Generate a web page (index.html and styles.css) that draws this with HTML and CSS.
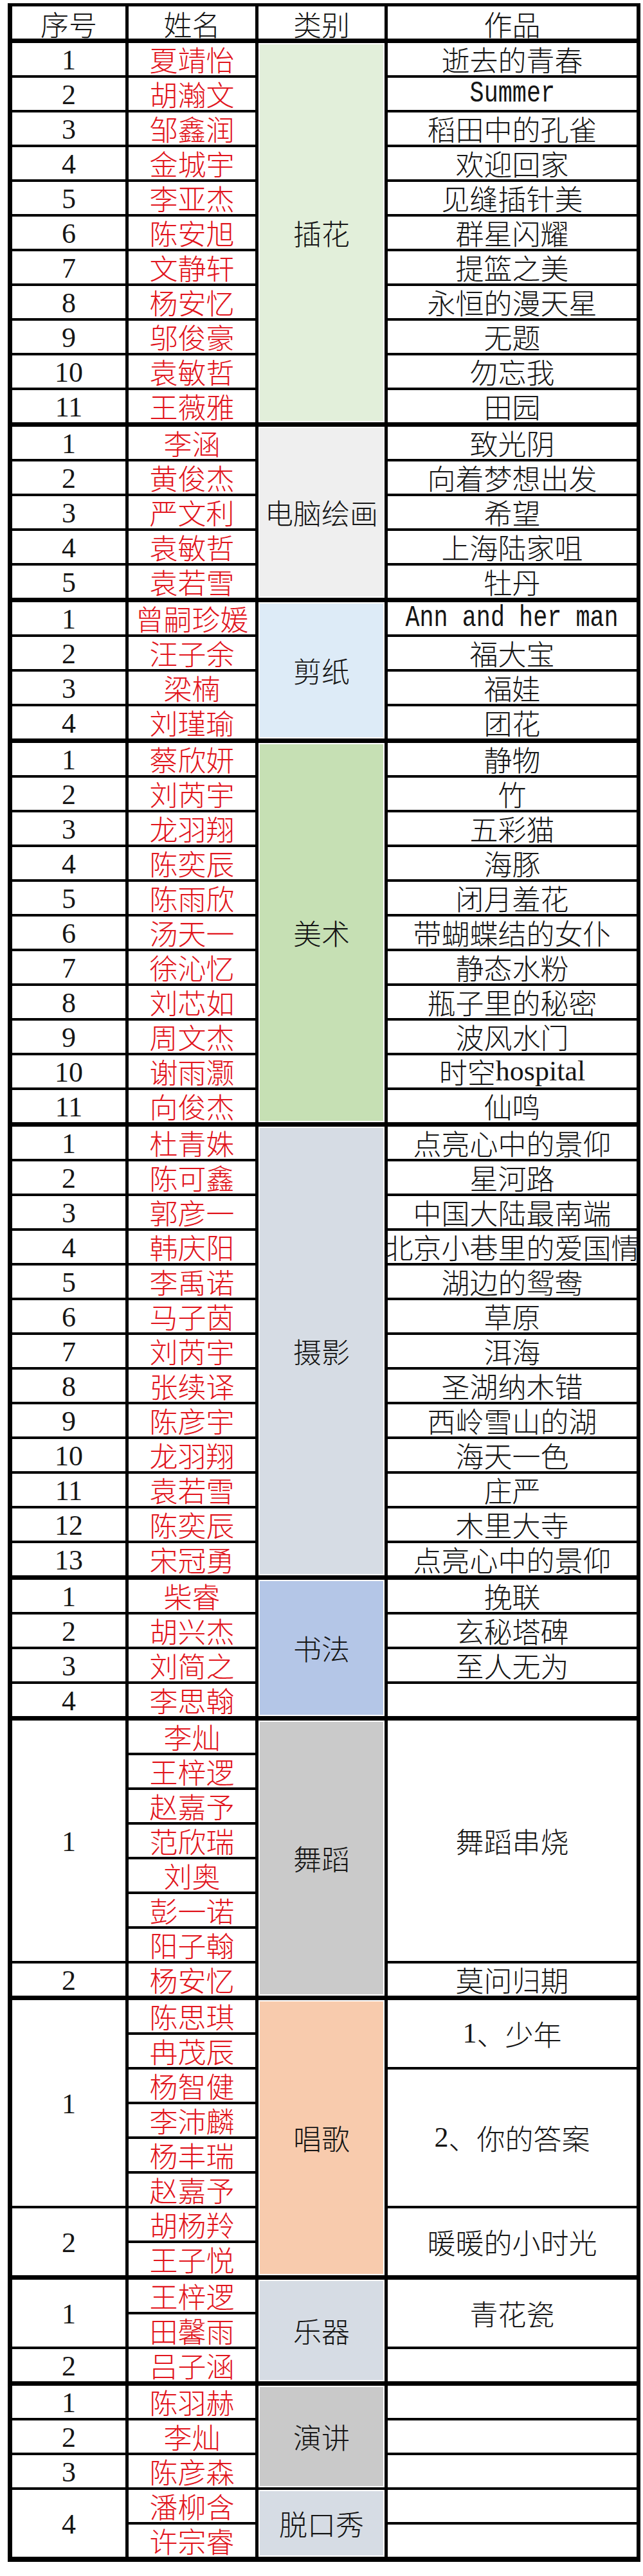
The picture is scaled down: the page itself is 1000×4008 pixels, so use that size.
FILE: index.html
```html
<!DOCTYPE html>
<html lang="zh-CN">
<head>
<meta charset="utf-8">
<title>作品名单</title>
<link rel="stylesheet" href="styles.css">
</head>
<body>
<div class="sheet">
  <div class="sec head">
    <div class="c n-h">序号</div>
    <div class="c nm-h">姓名</div>
    <div class="c cat-h">类别</div>
    <div class="c w">作品</div>
  </div>

  <div class="sec">
    <div class="c cat s11 bg-chahua">插花</div>
    <div class="c n">1</div><div class="c nm">夏靖怡</div><div class="c w">逝去的青春</div>
    <div class="c n">2</div><div class="c nm">胡瀚文</div><div class="c w"><span class="mono">Summer</span></div>
    <div class="c n">3</div><div class="c nm">邹鑫润</div><div class="c w">稻田中的孔雀</div>
    <div class="c n">4</div><div class="c nm">金城宇</div><div class="c w">欢迎回家</div>
    <div class="c n">5</div><div class="c nm">李亚杰</div><div class="c w">见缝插针美</div>
    <div class="c n">6</div><div class="c nm">陈安旭</div><div class="c w">群星闪耀</div>
    <div class="c n">7</div><div class="c nm">文静轩</div><div class="c w">提篮之美</div>
    <div class="c n">8</div><div class="c nm">杨安忆</div><div class="c w">永恒的漫天星</div>
    <div class="c n">9</div><div class="c nm">邬俊豪</div><div class="c w">无题</div>
    <div class="c n">10</div><div class="c nm">袁敏哲</div><div class="c w">勿忘我</div>
    <div class="c n">11</div><div class="c nm">王薇雅</div><div class="c w">田园</div>
  </div>

  <div class="sec">
    <div class="c cat s5 bg-diannao">电脑绘画</div>
    <div class="c n">1</div><div class="c nm">李涵</div><div class="c w">致光阴</div>
    <div class="c n">2</div><div class="c nm">黄俊杰</div><div class="c w">向着梦想出发</div>
    <div class="c n">3</div><div class="c nm">严文利</div><div class="c w">希望</div>
    <div class="c n">4</div><div class="c nm">袁敏哲</div><div class="c w">上海陆家咀</div>
    <div class="c n">5</div><div class="c nm">袁若雪</div><div class="c w">牡丹</div>
  </div>

  <div class="sec">
    <div class="c cat s4 bg-jianzhi">剪纸</div>
    <div class="c n">1</div><div class="c nm">曾嗣珍媛</div><div class="c w"><span class="mono">Ann and her man</span></div>
    <div class="c n">2</div><div class="c nm">汪子余</div><div class="c w">福大宝</div>
    <div class="c n">3</div><div class="c nm">梁楠</div><div class="c w">福娃</div>
    <div class="c n">4</div><div class="c nm">刘瑾瑜</div><div class="c w">团花</div>
  </div>

  <div class="sec">
    <div class="c cat s11 bg-meishu">美术</div>
    <div class="c n">1</div><div class="c nm">蔡欣妍</div><div class="c w">静物</div>
    <div class="c n">2</div><div class="c nm">刘芮宇</div><div class="c w">竹</div>
    <div class="c n">3</div><div class="c nm">龙羽翔</div><div class="c w">五彩猫</div>
    <div class="c n">4</div><div class="c nm">陈奕辰</div><div class="c w">海豚</div>
    <div class="c n">5</div><div class="c nm">陈雨欣</div><div class="c w">闭月羞花</div>
    <div class="c n">6</div><div class="c nm">汤天一</div><div class="c w">带蝴蝶结的女仆</div>
    <div class="c n">7</div><div class="c nm">徐沁忆</div><div class="c w">静态水粉</div>
    <div class="c n">8</div><div class="c nm">刘芯如</div><div class="c w">瓶子里的秘密</div>
    <div class="c n">9</div><div class="c nm">周文杰</div><div class="c w">波风水门</div>
    <div class="c n">10</div><div class="c nm">谢雨灏</div><div class="c w">时空<span class="lat">hospital</span></div>
    <div class="c n">11</div><div class="c nm">向俊杰</div><div class="c w">仙鸣</div>
  </div>

  <div class="sec">
    <div class="c cat s13 bg-sheying">摄影</div>
    <div class="c n">1</div><div class="c nm">杜青姝</div><div class="c w">点亮心中的景仰</div>
    <div class="c n">2</div><div class="c nm">陈可鑫</div><div class="c w">星河路</div>
    <div class="c n">3</div><div class="c nm">郭彦一</div><div class="c w">中国大陆最南端</div>
    <div class="c n">4</div><div class="c nm">韩庆阳</div><div class="c w">北京小巷里的爱国情</div>
    <div class="c n">5</div><div class="c nm">李禹诺</div><div class="c w">湖边的鸳鸯</div>
    <div class="c n">6</div><div class="c nm">马子茵</div><div class="c w">草原</div>
    <div class="c n">7</div><div class="c nm">刘芮宇</div><div class="c w">洱海</div>
    <div class="c n">8</div><div class="c nm">张续译</div><div class="c w">圣湖纳木错</div>
    <div class="c n">9</div><div class="c nm">陈彦宇</div><div class="c w">西岭雪山的湖</div>
    <div class="c n">10</div><div class="c nm">龙羽翔</div><div class="c w">海天一色</div>
    <div class="c n">11</div><div class="c nm">袁若雪</div><div class="c w">庄严</div>
    <div class="c n">12</div><div class="c nm">陈奕辰</div><div class="c w">木里大寺</div>
    <div class="c n">13</div><div class="c nm">宋冠勇</div><div class="c w">点亮心中的景仰</div>
  </div>

  <div class="sec">
    <div class="c cat s4 bg-shufa">书法</div>
    <div class="c n">1</div><div class="c nm">柴睿</div><div class="c w">挽联</div>
    <div class="c n">2</div><div class="c nm">胡兴杰</div><div class="c w">玄秘塔碑</div>
    <div class="c n">3</div><div class="c nm">刘简之</div><div class="c w">至人无为</div>
    <div class="c n">4</div><div class="c nm">李思翰</div><div class="c w"></div>
  </div>

  <div class="sec">
    <div class="c cat s8 bg-wudao">舞蹈</div>
    <div class="c n r7">1</div>
    <div class="c nm">李灿</div>
    <div class="c w r7">舞蹈串烧</div>
    <div class="c nm">王梓逻</div>
    <div class="c nm">赵嘉予</div>
    <div class="c nm">范欣瑞</div>
    <div class="c nm">刘奥</div>
    <div class="c nm">彭一诺</div>
    <div class="c nm">阳子翰</div>
    <div class="c n">2</div><div class="c nm">杨安忆</div><div class="c w">莫问归期</div>
  </div>

  <div class="sec">
    <div class="c cat s8 bg-changge">唱歌</div>
    <div class="c n r6">1</div>
    <div class="c nm">陈思琪</div>
    <div class="c w r2"><span class="lat">1</span>、少年</div>
    <div class="c nm">冉茂辰</div>
    <div class="c nm">杨智健</div>
    <div class="c w r4"><span class="lat">2</span>、你的答案</div>
    <div class="c nm">李沛麟</div>
    <div class="c nm">杨丰瑞</div>
    <div class="c nm">赵嘉予</div>
    <div class="c n r2">2</div>
    <div class="c nm">胡杨羚</div>
    <div class="c w r2">暖暖的小时光</div>
    <div class="c nm">王子悦</div>
  </div>

  <div class="sec">
    <div class="c cat s3 bg-yueqi">乐器</div>
    <div class="c n r2">1</div>
    <div class="c nm">王梓逻</div>
    <div class="c w r2">青花瓷</div>
    <div class="c nm">田馨雨</div>
    <div class="c n">2</div><div class="c nm">吕子涵</div><div class="c w"></div>
  </div>

  <div class="sec">
    <div class="c cat s3 bg-yanjiang">演讲</div>
    <div class="c cat s2b bg-tuokou">脱口秀</div>
    <div class="c n">1</div><div class="c nm">陈羽赫</div><div class="c w"></div>
    <div class="c n">2</div><div class="c nm">李灿</div><div class="c w"></div>
    <div class="c n">3</div><div class="c nm">陈彦森</div><div class="c w"></div>
    <div class="c n r2">4</div>
    <div class="c nm">潘柳含</div>
    <div class="c w"></div>
    <div class="c nm">许宗睿</div>
    <div class="c w"></div>
  </div>
</div>
</body>
</html>
```

FILE: styles.css
```css
* {
  box-sizing: border-box;
}

html,
body {
  margin: 0;
  padding: 0;
  background: #ffffff;
}

.sheet {
  margin: 5px 0 0 12px;
  width: 984px;
  background: #000000;
  padding: 5px 6px 8px 7px;
  display: flex;
  flex-direction: column;
  gap: 7px;
}

.sec {
  display: grid;
  grid-template-columns: 176px 197px 196px 387px;
  grid-auto-rows: 50px;
  column-gap: 5px;
  row-gap: 4px;
}

.c {
  background: #ffffff;
  display: flex;
  align-items: center;
  justify-content: center;
  white-space: nowrap;
  font-family: "Noto Sans CJK SC", "Noto Sans", sans-serif;
  font-weight: 300;
  font-size: 44px;
  line-height: 1;
  color: #151515;
}

.head .c {
  padding-top: 3px;
}

.n {
  grid-column: 1;
  font-family: "Liberation Serif", "Noto Sans CJK SC", serif;
  font-weight: 400;
  padding-top: 4px;
}

.nm {
  grid-column: 2;
  color: #e1141c;
}

.w {
  grid-column: 4;
}

.n-h { grid-column: 1; }
.nm-h { grid-column: 2; }
.cat-h { grid-column: 3; }

.cat {
  grid-column: 3;
  box-shadow: inset 0 0 0 2px #ffffff;
}

.s2b { grid-row: 4 / span 2; }
.s3 { grid-row: 1 / span 3; }
.s4 { grid-row: 1 / span 4; }
.s5 { grid-row: 1 / span 5; }
.s8 { grid-row: 1 / span 8; }
.s11 { grid-row: 1 / span 11; }
.s13 { grid-row: 1 / span 13; }

.r2 { grid-row: span 2; }
.r4 { grid-row: span 4; }
.r6 { grid-row: span 6; }
.r7 { grid-row: span 7; }

.lat {
  font-family: "Liberation Serif", serif;
  font-weight: 400;
}

.mono {
  display: inline-block;
  font-family: "Liberation Mono", monospace;
  font-weight: 400;
  font-size: 46px;
  transform: scaleX(0.8);
}

.bg-chahua { background: #e2efda; }
.bg-diannao { background: #efefef; }
.bg-jianzhi { background: #ddebf7; }
.bg-meishu { background: #c6e0b4; }
.bg-sheying { background: #d6dce4; }
.bg-shufa { background: #b4c6e7; }
.bg-wudao { background: #cacaca; }
.bg-changge { background: #f8cbad; }
.bg-yueqi { background: #d6dce4; }
.bg-yanjiang { background: #c9c9c9; }
.bg-tuokou { background: #d6dce4; }
```
